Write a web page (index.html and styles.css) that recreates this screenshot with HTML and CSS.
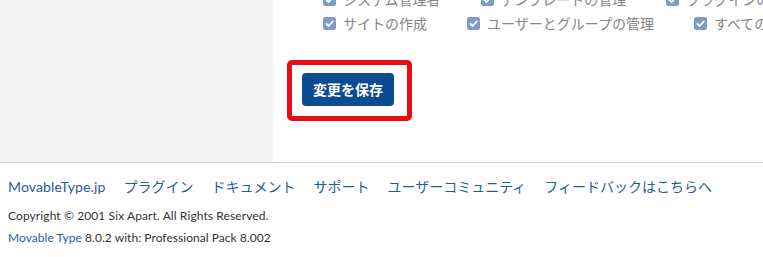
FILE: index.html
```html
<!DOCTYPE html>
<html lang="ja">
<head>
<meta charset="utf-8">
<title>Movable Type</title>
<link rel="stylesheet" href="styles.css">
</head>
<body>
<div class="page">
  <div class="top">
    <aside class="sidebar"></aside>
    <main class="main">
      <div class="perms">
        <div class="perm-row">
          <label class="perm"><svg class="cb" viewBox="0 0 13 13" width="13" height="13"><rect width="13" height="13" rx="2.5" fill="#7d9cc9"/><polyline points="3.4,6.9 5.6,9 9.7,4.5" fill="none" stroke="#fff" stroke-width="1.8" stroke-linecap="round" stroke-linejoin="round"/></svg><span>システム管理者</span></label>
          <label class="perm"><svg class="cb" viewBox="0 0 13 13" width="13" height="13"><rect width="13" height="13" rx="2.5" fill="#7d9cc9"/><polyline points="3.4,6.9 5.6,9 9.7,4.5" fill="none" stroke="#fff" stroke-width="1.8" stroke-linecap="round" stroke-linejoin="round"/></svg><span>テンプレートの管理</span></label>
          <label class="perm"><svg class="cb" viewBox="0 0 13 13" width="13" height="13"><rect width="13" height="13" rx="2.5" fill="#7d9cc9"/><polyline points="3.4,6.9 5.6,9 9.7,4.5" fill="none" stroke="#fff" stroke-width="1.8" stroke-linecap="round" stroke-linejoin="round"/></svg><span>プラグインの管理</span></label>
        </div>
        <div class="perm-row">
          <label class="perm"><svg class="cb" viewBox="0 0 13 13" width="13" height="13"><rect width="13" height="13" rx="2.5" fill="#7d9cc9"/><polyline points="3.4,6.9 5.6,9 9.7,4.5" fill="none" stroke="#fff" stroke-width="1.8" stroke-linecap="round" stroke-linejoin="round"/></svg><span>サイトの作成</span></label>
          <label class="perm"><svg class="cb" viewBox="0 0 13 13" width="13" height="13"><rect width="13" height="13" rx="2.5" fill="#7d9cc9"/><polyline points="3.4,6.9 5.6,9 9.7,4.5" fill="none" stroke="#fff" stroke-width="1.8" stroke-linecap="round" stroke-linejoin="round"/></svg><span>ユーザーとグループの管理</span></label>
          <label class="perm"><svg class="cb" viewBox="0 0 13 13" width="13" height="13"><rect width="13" height="13" rx="2.5" fill="#7d9cc9"/><polyline points="3.4,6.9 5.6,9 9.7,4.5" fill="none" stroke="#fff" stroke-width="1.8" stroke-linecap="round" stroke-linejoin="round"/></svg><span>すべてのサイトの管理</span></label>
        </div>
      </div>
      <div class="actions">
        <div class="highlight">
          <button class="btn-primary" type="button">変更を保存</button>
        </div>
      </div>
    </main>
  </div>
  <footer class="footer">
    <nav class="footer-links">
      <a href="#" class="brand-link">MovableType.jp</a>
      <a href="#">プラグイン</a>
      <a href="#">ドキュメント</a>
      <a href="#">サポート</a>
      <a href="#">ユーザーコミュニティ</a>
      <a href="#">フィードバックはこちらへ</a>
    </nav>
    <p class="copyright">Copyright © 2001 Six Apart. All Rights Reserved.</p>
    <p class="version"><a href="#">Movable Type</a> 8.0.2 with: Professional Pack 8.002</p>
  </footer>
</div>
</body>
</html>
```
FILE: styles.css
```css
html, body {
  margin: 0;
  padding: 0;
  background: #fff;
}
body {
  font-family: "Lato", "Noto Sans CJK JP", sans-serif;
  color: #333;
  width: 763px;
  height: 257px;
  overflow: hidden;
}
.top {
  display: flex;
  height: 162px;
  overflow: hidden;
}
.sidebar {
  width: 273px;
  flex: none;
  background: #f4f4f4;
}
.main {
  flex: 1;
  min-width: 0;
  overflow: hidden;
}
.perms {
  margin-top: -13px;
  padding-left: 50px;
}
.perm-row {
  display: flex;
  gap: 40px;
  white-space: nowrap;
  height: 24px;
  align-items: center;
}
.perm {
  display: flex;
  align-items: center;
  gap: 7px;
  font-size: 14px;
  color: #858585;
  flex: none;
}
.cb {
  display: block;
  flex: none;
}
.actions {
  margin-top: 25px;
  padding-left: 14px;
  display: flex;
}
.highlight {
  border: 5px solid #ea0a13;
  border-radius: 5px;
  padding: 8px 13px 10px 10px;
}
.btn-primary {
  display: block;
  height: 33px;
  padding: 0 11px;
  border: 0;
  border-radius: 4px;
  background: #0a4b91;
  color: #fff;
  font-family: "Noto Sans CJK JP", sans-serif;
  font-weight: 700;
  font-size: 14px;
  line-height: 33px;
}
.footer {
  border-top: 1px solid #cfcfcf;
  padding: 14px 8px 0;
}
.footer-links {
  display: flex;
  gap: 18px;
  font-size: 14px;
  line-height: 20px;
  white-space: nowrap;
}
.brand-link {
  letter-spacing: 0.14px;
}
.footer a {
  color: #1e5e9e;
  text-decoration: none;
}
.copyright, .version {
  margin: 0;
  font-size: 12px;
  line-height: 22px;
  color: #333;
}
.copyright {
  margin-top: 8px;
  letter-spacing: 0.1px;
}
.version {
  letter-spacing: 0.04px;
}
```
